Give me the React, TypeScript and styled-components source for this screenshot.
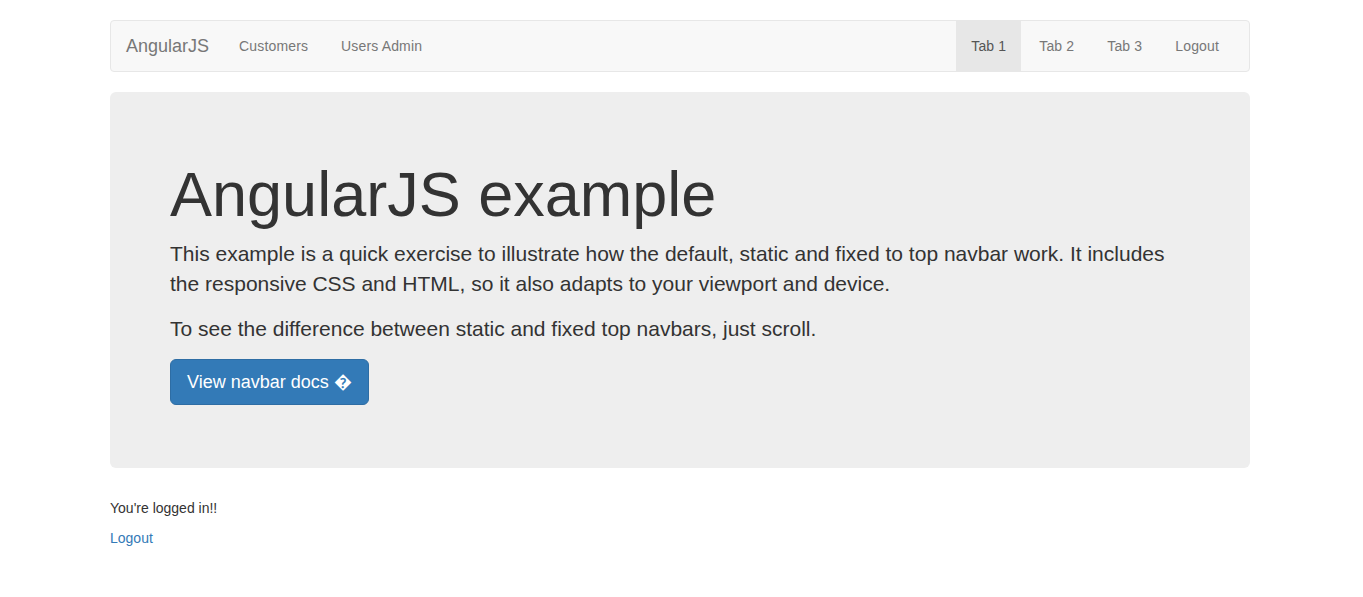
import React from "react";
import styled, { createGlobalStyle } from "styled-components";

const GlobalStyle = createGlobalStyle`
  * { box-sizing: border-box; }
  html, body { margin: 0; background: #fff; }
  body {
    padding: 20px 0;
    font-family: "Liberation Sans", Arial, Helvetica, sans-serif;
    font-size: 14px;
    line-height: 20px;
    color: #333;
  }
`;

const Container = styled.div`
  width: 1140px;
  margin-left: 110px;
`;

const Navbar = styled.nav`
  display: flex;
  align-items: stretch;
  justify-content: space-between;
  min-height: 52px;
  margin-bottom: 20px;
  background: #f8f8f8;
  border: 1px solid #e7e7e7;
  border-radius: 4px;
  padding-right: 15px;
`;

const Left = styled.div`
  display: flex;
  align-items: stretch;
`;

const Brand = styled.a`
  display: block;
  padding: 15px;
  height: 50px;
  font-size: 18px;
  line-height: 20px;
  color: #777;
  text-decoration: none;
`;

const NavList = styled.ul`
  display: flex;
  gap: 3px;
  margin: 0;
  padding: 0;
  list-style: none;
`;

const NavLink = styled.a<{ $active?: boolean }>`
  display: block;
  padding: 15px;
  line-height: 20px;
  letter-spacing: 0.15px;
  color: ${(p) => (p.$active ? "#555" : "#777")};
  background: ${(p) => (p.$active ? "#e7e7e7" : "transparent")};
  text-decoration: none;
`;

const Jumbotron = styled.div`
  padding: 48px 60px;
  margin-bottom: 30px;
  background: #eee;
  border-radius: 6px;
`;

const Title = styled.h1`
  margin: 20px 0 10px;
  font-size: 63px;
  font-weight: 500;
  line-height: 1.1;
  color: inherit;
`;

const Lead = styled.p`
  margin: 0 0 15px;
  font-size: 21px;
  line-height: 30px;
  font-weight: 200;
`;

const ButtonRow = styled.p`
  margin: 0 0 15px;
  font-size: 21px;
  line-height: 30px;
`;

const PrimaryButton = styled.a`
  display: inline-block;
  vertical-align: middle;
  padding: 10px 16px;
  font-size: 18px;
  line-height: 24px;
  color: #fff;
  background: #337ab7;
  border: 1px solid #2e6da4;
  border-radius: 6px;
  text-decoration: none;
`;

const Text = styled.p`
  margin: 0 0 10px;
`;

const Link = styled.a`
  color: #337ab7;
  text-decoration: none;
`;

export default function App() {
  return (
    <>
      <GlobalStyle />
      <Container>
        <Navbar>
          <Left>
            <Brand href="#">AngularJS</Brand>
            <NavList>
              <li><NavLink href="#">Customers</NavLink></li>
              <li><NavLink href="#">Users Admin</NavLink></li>
            </NavList>
          </Left>
          <NavList>
            <li><NavLink href="#" $active>Tab 1</NavLink></li>
            <li><NavLink href="#">Tab 2</NavLink></li>
            <li><NavLink href="#">Tab 3</NavLink></li>
            <li><NavLink href="#">Logout</NavLink></li>
          </NavList>
        </Navbar>
        <Jumbotron>
          <Title>AngularJS example</Title>
          <Lead>
            This example is a quick exercise to illustrate how the default, static and fixed to top navbar work. It includes the responsive CSS and HTML, so it also adapts to your viewport and device.
          </Lead>
          <Lead>To see the difference between static and fixed top navbars, just scroll.</Lead>
          <ButtonRow>
            <PrimaryButton href="#">View navbar docs {"\uFFFD"}</PrimaryButton>
          </ButtonRow>
        </Jumbotron>
        <div>
          <Text>You're logged in!!</Text>
          <Text><Link href="#">Logout</Link></Text>
        </div>
      </Container>
    </>
  );
}
